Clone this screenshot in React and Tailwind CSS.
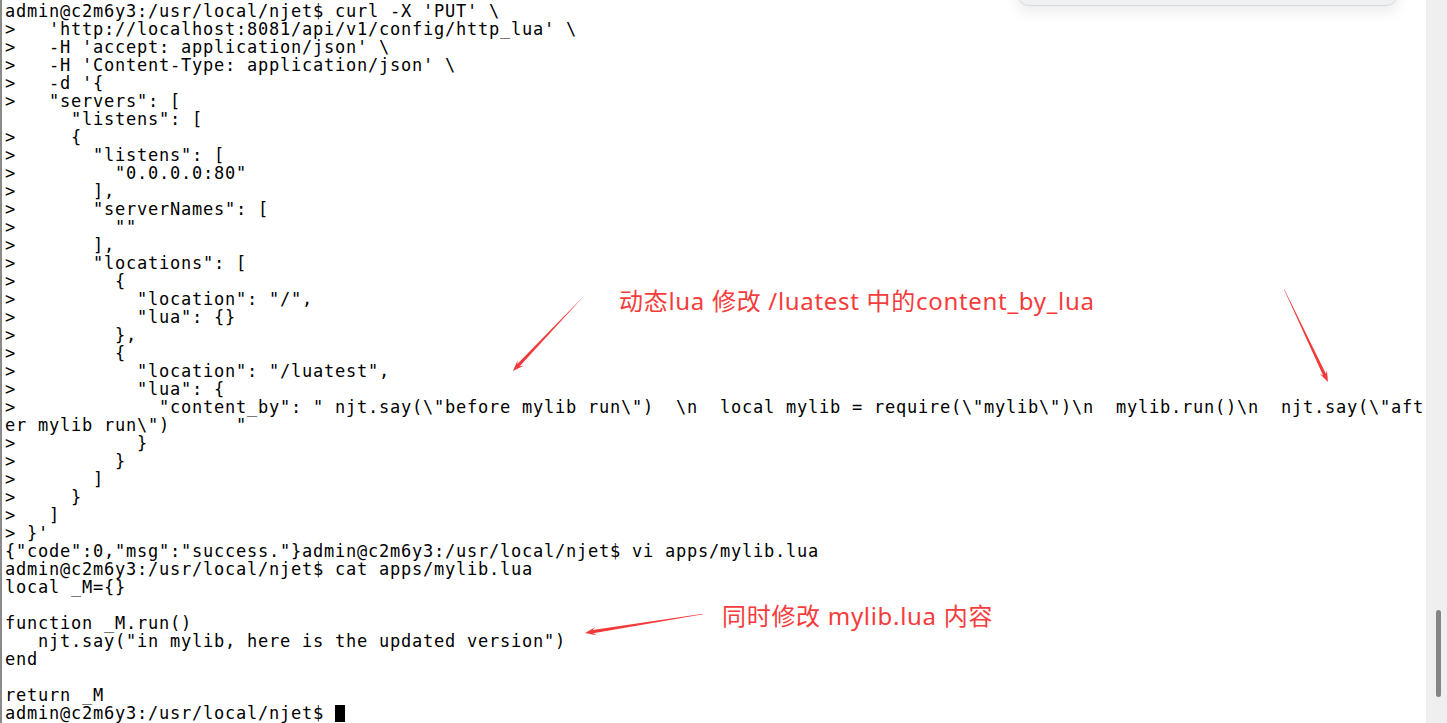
import React from "react";

// terminal dump, one entry per row (wrapped row kept as its own line)
const LINES = [
  "admin@c2m6y3:/usr/local/njet$ curl -X 'PUT' \\",
  ">   'http://localhost:8081/api/v1/config/http_lua' \\",
  ">   -H 'accept: application/json' \\",
  ">   -H 'Content-Type: application/json' \\",
  ">   -d '{",
  ">   \"servers\": [",
  "      \"listens\": [",
  ">     {",
  ">       \"listens\": [",
  ">         \"0.0.0.0:80\"",
  ">       ],",
  ">       \"serverNames\": [",
  ">         \"\"",
  ">       ],",
  ">       \"locations\": [",
  ">         {",
  ">           \"location\": \"/\",",
  ">           \"lua\": {}",
  ">         },",
  ">         {",
  ">           \"location\": \"/luatest\",",
  ">           \"lua\": {",
  ">             \"content_by\": \" njt.say(\\\"before mylib run\\\")  \\n  local mylib = require(\\\"mylib\\\")\\n  mylib.run()\\n  njt.say(\\\"aft",
  "er mylib run\\\")      \"",
  ">           }",
  ">         }",
  ">       ]",
  ">     }",
  ">   ]",
  "> }'",
  "{\"code\":0,\"msg\":\"success.\"}admin@c2m6y3:/usr/local/njet$ vi apps/mylib.lua",
  "admin@c2m6y3:/usr/local/njet$ cat apps/mylib.lua",
  "local _M={}",
  "",
  "function _M.run()",
  "   njt.say(\"in mylib, here is the updated version\")",
  "end",
  "",
  "return _M",
];

// tapered red arrow, thin at the tail, head at (x2, y2)
function arrowPoints(x1, y1, x2, y2) {
  const len = Math.hypot(x2 - x1, y2 - y1);
  const dx = (x2 - x1) / len;
  const dy = (y2 - y1) / len;
  const nx = -dy;
  const ny = dx;
  const p = (x, y) => `${x.toFixed(1)},${y.toFixed(1)}`;
  const sx = x2 - dx * 8;
  const sy = y2 - dy * 8;
  const hx = x2 - dx * 11;
  const hy = y2 - dy * 11;
  return [
    p(x1 + nx * 0.2, y1 + ny * 0.2),
    p(sx + nx * 1.6, sy + ny * 1.6),
    p(hx + nx * 4, hy + ny * 4),
    p(x2, y2),
    p(hx - nx * 4, hy - ny * 4),
    p(sx - nx * 1.6, sy - ny * 1.6),
    p(x1 - nx * 0.2, y1 - ny * 0.2),
  ].join(" ");
}

const ARROWS = [
  [582, 298, 513, 371],
  [1284, 289, 1328, 382],
  [703, 614, 585, 633],
];

function App() {
  return (
    <div className="relative w-[1447px] h-[723px] overflow-hidden bg-white flex">
      <div className="flex-1 border-l-2 border-[#8a8a8a] pl-[3px] pt-[2px]">
        <pre className="font-['DejaVu_Sans_Mono',monospace] text-[17px] leading-[18px] tracking-[0.765px] text-black whitespace-pre">
          {LINES.map((l, i) => (
            <div key={i} className="h-[18px]">{l}</div>
          ))}
          <div className="h-[18px] flex items-center">
            <span>admin@c2m6y3:/usr/local/njet$ </span>
            <span className="inline-block w-[10px] h-[17px] bg-black" />
          </div>
        </pre>
      </div>

      {/* scrollbar */}
      <div className="w-[21px] bg-[#efefef] flex flex-col pt-[610px] pl-[10px]">
        <div className="w-[5px] h-[87px] rounded-full bg-[#858585]" />
      </div>

      {/* popup peeking at the top */}
      <div className="absolute left-[1017px] top-[-40px] w-[381px] h-[46px] rounded-b-[12px] bg-[#f0f1f3] border border-[#d9d9e2] shadow-[0_6px_14px_rgba(0,0,0,0.08)]" />

      {/* annotations */}
      <div className="absolute left-[619px] top-[285px] text-[24px] leading-[32px] tracking-[0.7px] text-[#f53c3c] whitespace-nowrap font-['Noto_Sans','Noto_Sans_CJK_SC',sans-serif]">
        动态lua 修改 /luatest 中的content_by_lua
      </div>
      <div className="absolute left-[722px] top-[600px] text-[24px] leading-[32px] tracking-[0.7px] text-[#f53c3c] whitespace-nowrap font-['Noto_Sans','Noto_Sans_CJK_SC',sans-serif]">
        同时修改 mylib.lua 内容
      </div>
      <svg className="absolute inset-0 pointer-events-none" width="1447" height="723">
        {ARROWS.map((a, i) => (
          <polygon key={i} points={arrowPoints(...a)} fill="#f23a3a" />
        ))}
      </svg>
    </div>
  );
}

export default App;
